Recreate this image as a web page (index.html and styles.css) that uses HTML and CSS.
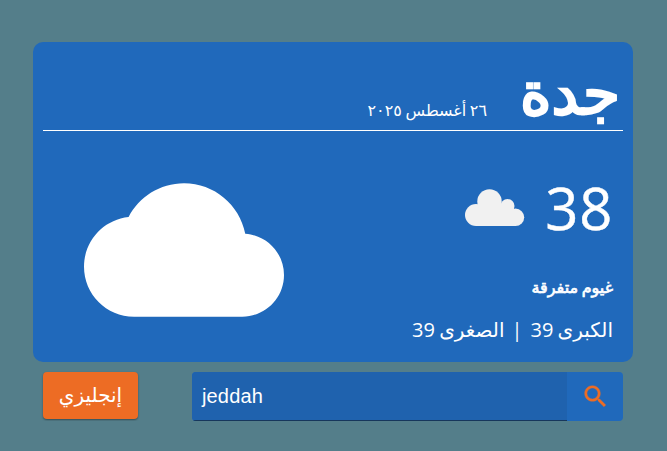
FILE: index.html
```html
<!DOCTYPE html>
<html lang="ar" dir="rtl">
<head>
<meta charset="utf-8">
<title>الطقس</title>
<link rel="stylesheet" href="styles.css">
</head>
<body>
<main class="app">
  <section class="card">
    <header class="head">
      <h1 class="city">جدة</h1>
      <p class="date">٢٦ أغسطس ٢٠٢٥</p>
    </header>
    <div class="content">
      <div class="details">
        <div class="now">
          <span class="temp">38</span>
          <svg class="small-cloud" viewBox="0 0 60 38" width="60" height="38"><g fill="#f1f1f1"><circle cx="11" cy="26" r="11"/><circle cx="24.500" cy="12.500" r="12.200"/><circle cx="42.500" cy="17" r="7"/><circle cx="50.500" cy="28.300" r="8.700"/><path d="M11 20h8l20-5 8 8 4 14H11z"/></g></svg>
        </div>
        <p class="desc">غيوم متفرقة</p>
        <p class="range"><span>الكبرى 39</span><span class="sep">|</span><span>الصغرى 39</span></p>
      </div>
      <svg class="big-cloud" viewBox="0 0 24 24" width="200" height="200"><path fill="#fff" d="M19.350 10.040C18.670 6.590 15.640 4 12 4 9.110 4 6.600 5.640 5.350 8.040 2.340 8.360 0 10.910 0 14c0 3.310 2.690 6 6 6h13c2.760 0 5-2.240 5-5 0-2.640-2.050-4.780-4.650-4.960z"/></svg>
    </div>
  </section>
  <div class="bar">
    <div class="search" dir="ltr">
      <div class="field">jeddah</div>
      <button class="go" aria-label="بحث"><svg viewBox="0 0 24 24" width="29" height="29"><path fill="#ed6c24" stroke="#ed6c24" stroke-width=".3" d="M15.500 14h-.79l-.28-.27C15.410 12.590 16 11.110 16 9.500 16 5.910 13.090 3 9.500 3S3 5.910 3 9.500 5.910 16 9.500 16c1.610 0 3.090-.59 4.230-1.570l.27.28v.79l5 4.990L20.490 19l-4.990-5zm-6 0C7.010 14 5 11.990 5 9.500S7.010 5 9.500 5 14 7.010 14 9.500 11.990 14 9.500 14z"/></svg></button>
    </div>
    <button class="lang">إنجليزي</button>
  </div>
</main>
</body>
</html>
```
FILE: styles.css
```css
* { box-sizing: border-box; }
body { margin: 0; background: #547e8a; color: #fff; font-family: "Open Sans", "DejaVu Sans", sans-serif; overflow: hidden; }
p, h1 { margin: 0; }
.app { width: 600px; margin: 42px 34px 0 33px; direction: ltr; }
.card { direction: rtl; height: 320px; padding: 10px; border-radius: 10px; background: #2069bb; }
.head { display: flex; height: 79px; border-bottom: 1px solid #fff; padding: 0 3px 0 5px; }
.city { font: normal 60px/82px "DejaVu Sans", sans-serif; -webkit-text-stroke: 2.5px #fff; width: 99px; white-space: nowrap; }
.date { font-size: 16px; line-height: 20px; word-spacing: -0.5px; margin: 48px 34px 0 0; white-space: nowrap; }
.content { display: flex; justify-content: space-between; padding: 0 10px 0 41px; }
.details { width: 230px; }
.now { display: flex; align-items: center; margin-top: 34px; height: 86px; }
.temp { width: 68px; font: 58px/86px "Open Sans", sans-serif; letter-spacing: 0.7px; -webkit-text-stroke: 0.4px #fff; }
.small-cloud { margin-right: 20px; }
.desc { font: normal 16px/20px "DejaVu Sans", sans-serif; -webkit-text-stroke: 0.7px #fff; word-spacing: -1.5px; margin-top: 27px; }
.range { display: flex; gap: 8px; font: 20px/28px "Open Sans", "DejaVu Sans", sans-serif; word-spacing: -1px; margin-top: 18px; white-space: nowrap; }
.sep { margin-left: -1px; }
.big-cloud { margin-top: 19px; flex: none; }
.bar { display: flex; flex-direction: row-reverse; justify-content: space-between; padding: 0 10px; margin-top: 10px; }
.search { display: flex; width: 431px; height: 49px; border-radius: 4px; background: #2069bb; overflow: hidden; }
.field { width: 375px; padding-left: 10px; background: #1f62ae; border-bottom: 1px solid #17375c; font: 20px/48px "Liberation Sans", sans-serif; letter-spacing: 0.15px; }
.go { width: 56px; border: 0; padding: 0; background: none; display: flex; align-items: center; justify-content: center; }
.lang { width: 95px; height: 47px; padding: 0; border: 0; border-radius: 4px; background: #ed6c24; color: #fff; font: 20px/47px "DejaVu Sans", sans-serif; box-shadow: 0 1px 2px #0006; }
```
